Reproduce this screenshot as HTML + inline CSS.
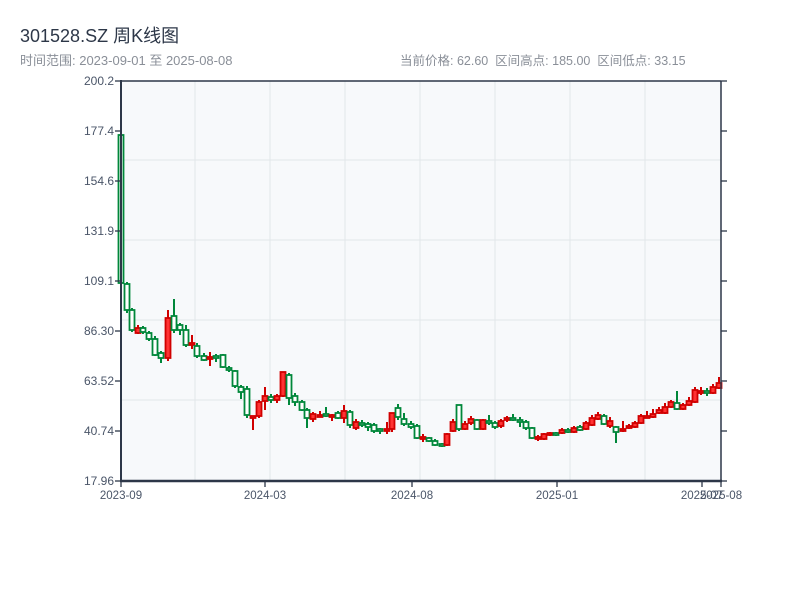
<!DOCTYPE html>
<html><head><meta charset="utf-8"><style>
body{margin:0;width:800px;height:600px;background:#fff;font-family:"Liberation Sans","Noto Sans CJK SC",sans-serif;overflow:hidden;position:relative}
.t{position:absolute;left:20px;top:22px;font-size:18px;color:#2d3748}
.s{position:absolute;top:50px;font-size:13px;color:#8a8f98}
svg{position:absolute;left:0;top:0}
</style></head><body>
<div class="t">301528.SZ 周K线图</div>
<div class="s" style="left:20px">时间范围: 2023-09-01 至 2025-08-08</div>
<div class="s" style="left:400px;font-size:12.5px">当前价格: 62.60&nbsp;&nbsp;区间高点: 185.00&nbsp;&nbsp;区间低点: 33.15</div>
<svg id="g" width="800" height="600" xmlns="http://www.w3.org/2000/svg"></svg>
<script>
var c=[
[121,'g',135,283,132,285],[127,'g',284,310,282,313],[132,'g',310,330,308,332],[138,'r',328,333,325,334],[143,'g',328,332,326,334],[149,'g',333,339,331,341],[155,'g',339,355,336,356],[161,'g',353,358,351,363],[168,'r',318,358,310,361],[174,'g',316,330,299,333],[180,'g',325,330,323,335],[186,'g',330,345,325,347],[192,'r',343,345,335,349],[197,'g',346,356,343,358],[204,'g',356,360,353,361],[210,'r',357,359,352,366],[216,'g',356,358,354,362],[223,'g',355,367,354,368],[229,'g',368,370,366,372],[235,'g',371,386,370,388],[241,'g',387,392,385,399],[247,'g',389,415,386,418],[253,'r',416,418,416,430],[259,'r',402,416,400,418],[265,'r',396,401,387,410],[271,'g',397,400,394,403],[277,'r',396,400,394,403],[283,'r',372,396,372,397],[289,'g',375,398,373,405],
[295,'g',396,402,393,406],[302,'g',402,410,400,411],[307,'g',410,418,408,428],[313,'r',414,419,412,422],[320,'r',415,416,411,417],[326,'g',414,416,407,417],[332,'r',415,417,414,421],[338,'g',413,418,411,419],[344,'r',411,418,405,423],[350,'g',412,425,410,428],[356,'r',422,428,419,430],[362,'g',423,425,420,427],[368,'g',424,427,422,431],[374,'g',425,431,423,433],[380,'g',429,431,428,434],[387,'r',429,431,422,434],[392,'r',413,429,413,432],[398,'g',408,417,404,420],[404,'g',419,424,413,426],[411,'g',424,427,421,429],[417,'g',426,438,424,439],[423,'r',437,439,434,442],[429,'g',438,441,437,442],[435,'g',441,445,439,446],[442,'g',444,446,443,447],[447,'r',434,445,433,446],[453,'r',422,431,419,432],[459,'g',405,429,405,431],
[465,'r',424,429,421,430],[471,'r',419,423,416,425],[477,'g',420,429,419,430],[483,'r',420,429,419,430],[489,'g',421,423,415,425],[495,'g',423,427,421,429],[501,'r',421,426,419,428],[507,'r',418,420,416,422],[513,'g',418,420,414,421],[520,'g',420,422,417,427],[526,'g',422,428,420,430],[532,'g',428,438,427,439],[538,'r',437,438,435,441],[544,'r',434,439,433,440],[550,'r',433,435,432,436],[556,'g',433,435,432,436],[562,'r',430,433,428,434],[568,'g',430,432,428,433],[574,'r',428,432,426,433],[580,'g',427,430,425,431],[586,'r',423,429,421,430],[592,'r',418,425,415,426],[598,'r',415,419,412,420],[604,'g',416,424,414,425],[610,'r',421,426,417,428],[616,'g',427,432,426,443],[623,'r',429,431,421,432],[629,'r',426,428,424,429],[635,'r',423,427,421,428],[641,'r',416,423,414,424],[647,'r',416,417,411,418],[653,'r',414,417,409,418],[659,'r',410,413,407,414],[665,'r',407,413,403,414],[671,'r',402,407,400,408],[677,'g',403,409,391,410],[683,'r',405,409,403,410],[689,'r',401,405,397,406],[695,'r',390,402,387,403],[701,'r',391,392,387,395],[707,'g',391,393,388,396],[713,'r',387,393,384,394],[719,'r',383,388,377,389]];
var s='<rect x="121" y="81" width="600" height="400" fill="#f7f9fb"/>';
[195,270,345,420,495,570,645].forEach(function(x){s+='<line x1="'+x+'" y1="81" x2="'+x+'" y2="481" stroke="#e2e6ea" stroke-width="1"/>'});
[160,240,320,400].forEach(function(y){s+='<line x1="121" y1="'+y+'" x2="721" y2="'+y+'" stroke="#e2e6ea" stroke-width="1"/>'});
c.forEach(function(k){var x=k[0],r=k[1]=='r',col=r?'#d00000':'#00873a',f=r?'#ff3333':'#fff';
s+='<line x1="'+x+'" y1="'+k[4]+'" x2="'+x+'" y2="'+k[5]+'" stroke="'+col+'" stroke-width="2"/>';
var h=Math.max(k[3]-k[2],2);s+='<rect x="'+(x-2.5)+'" y="'+k[2]+'" width="5" height="'+h+'" fill="'+f+'" stroke="'+col+'" stroke-width="1.8"/>';});
s+='<g stroke="#2d3748" stroke-width="1.5" fill="none"><line x1="121" y1="81" x2="721" y2="81"/><line x1="721" y1="81" x2="721" y2="481"/><line x1="121" y1="80" x2="121" y2="482" stroke-width="2"/><line x1="120" y1="481" x2="722" y2="481" stroke-width="2.5"/></g>';
var L=['200.2','177.4','154.6','131.9','109.1','86.30','63.52','40.74','17.96'];
L.forEach(function(t,i){var y=81+i*50;s+='<line x1="115" y1="'+y+'" x2="121" y2="'+y+'" stroke="#2d3748" stroke-width="1.3"/><line x1="721" y1="'+y+'" x2="727" y2="'+y+'" stroke="#2d3748" stroke-width="1.3"/><text x="114" y="'+(y+4)+'" text-anchor="end" font-size="12" fill="#4a5568" font-family="Liberation Sans,sans-serif">'+t+'</text>'});
[[121,'2023-09'],[265,'2024-03'],[412,'2024-08'],[557,'2025-01'],[702,'2025-07'],[721,'2025-08']].forEach(function(a){s+='<line x1="'+a[0]+'" y1="481" x2="'+a[0]+'" y2="487" stroke="#2d3748" stroke-width="1.3"/><text x="'+a[0]+'" y="499" text-anchor="middle" font-size="11.5" fill="#4a5568" font-family="Liberation Sans,sans-serif">'+a[1]+'</text>'});
document.getElementById('g').innerHTML=s;
</script>
</body></html>
